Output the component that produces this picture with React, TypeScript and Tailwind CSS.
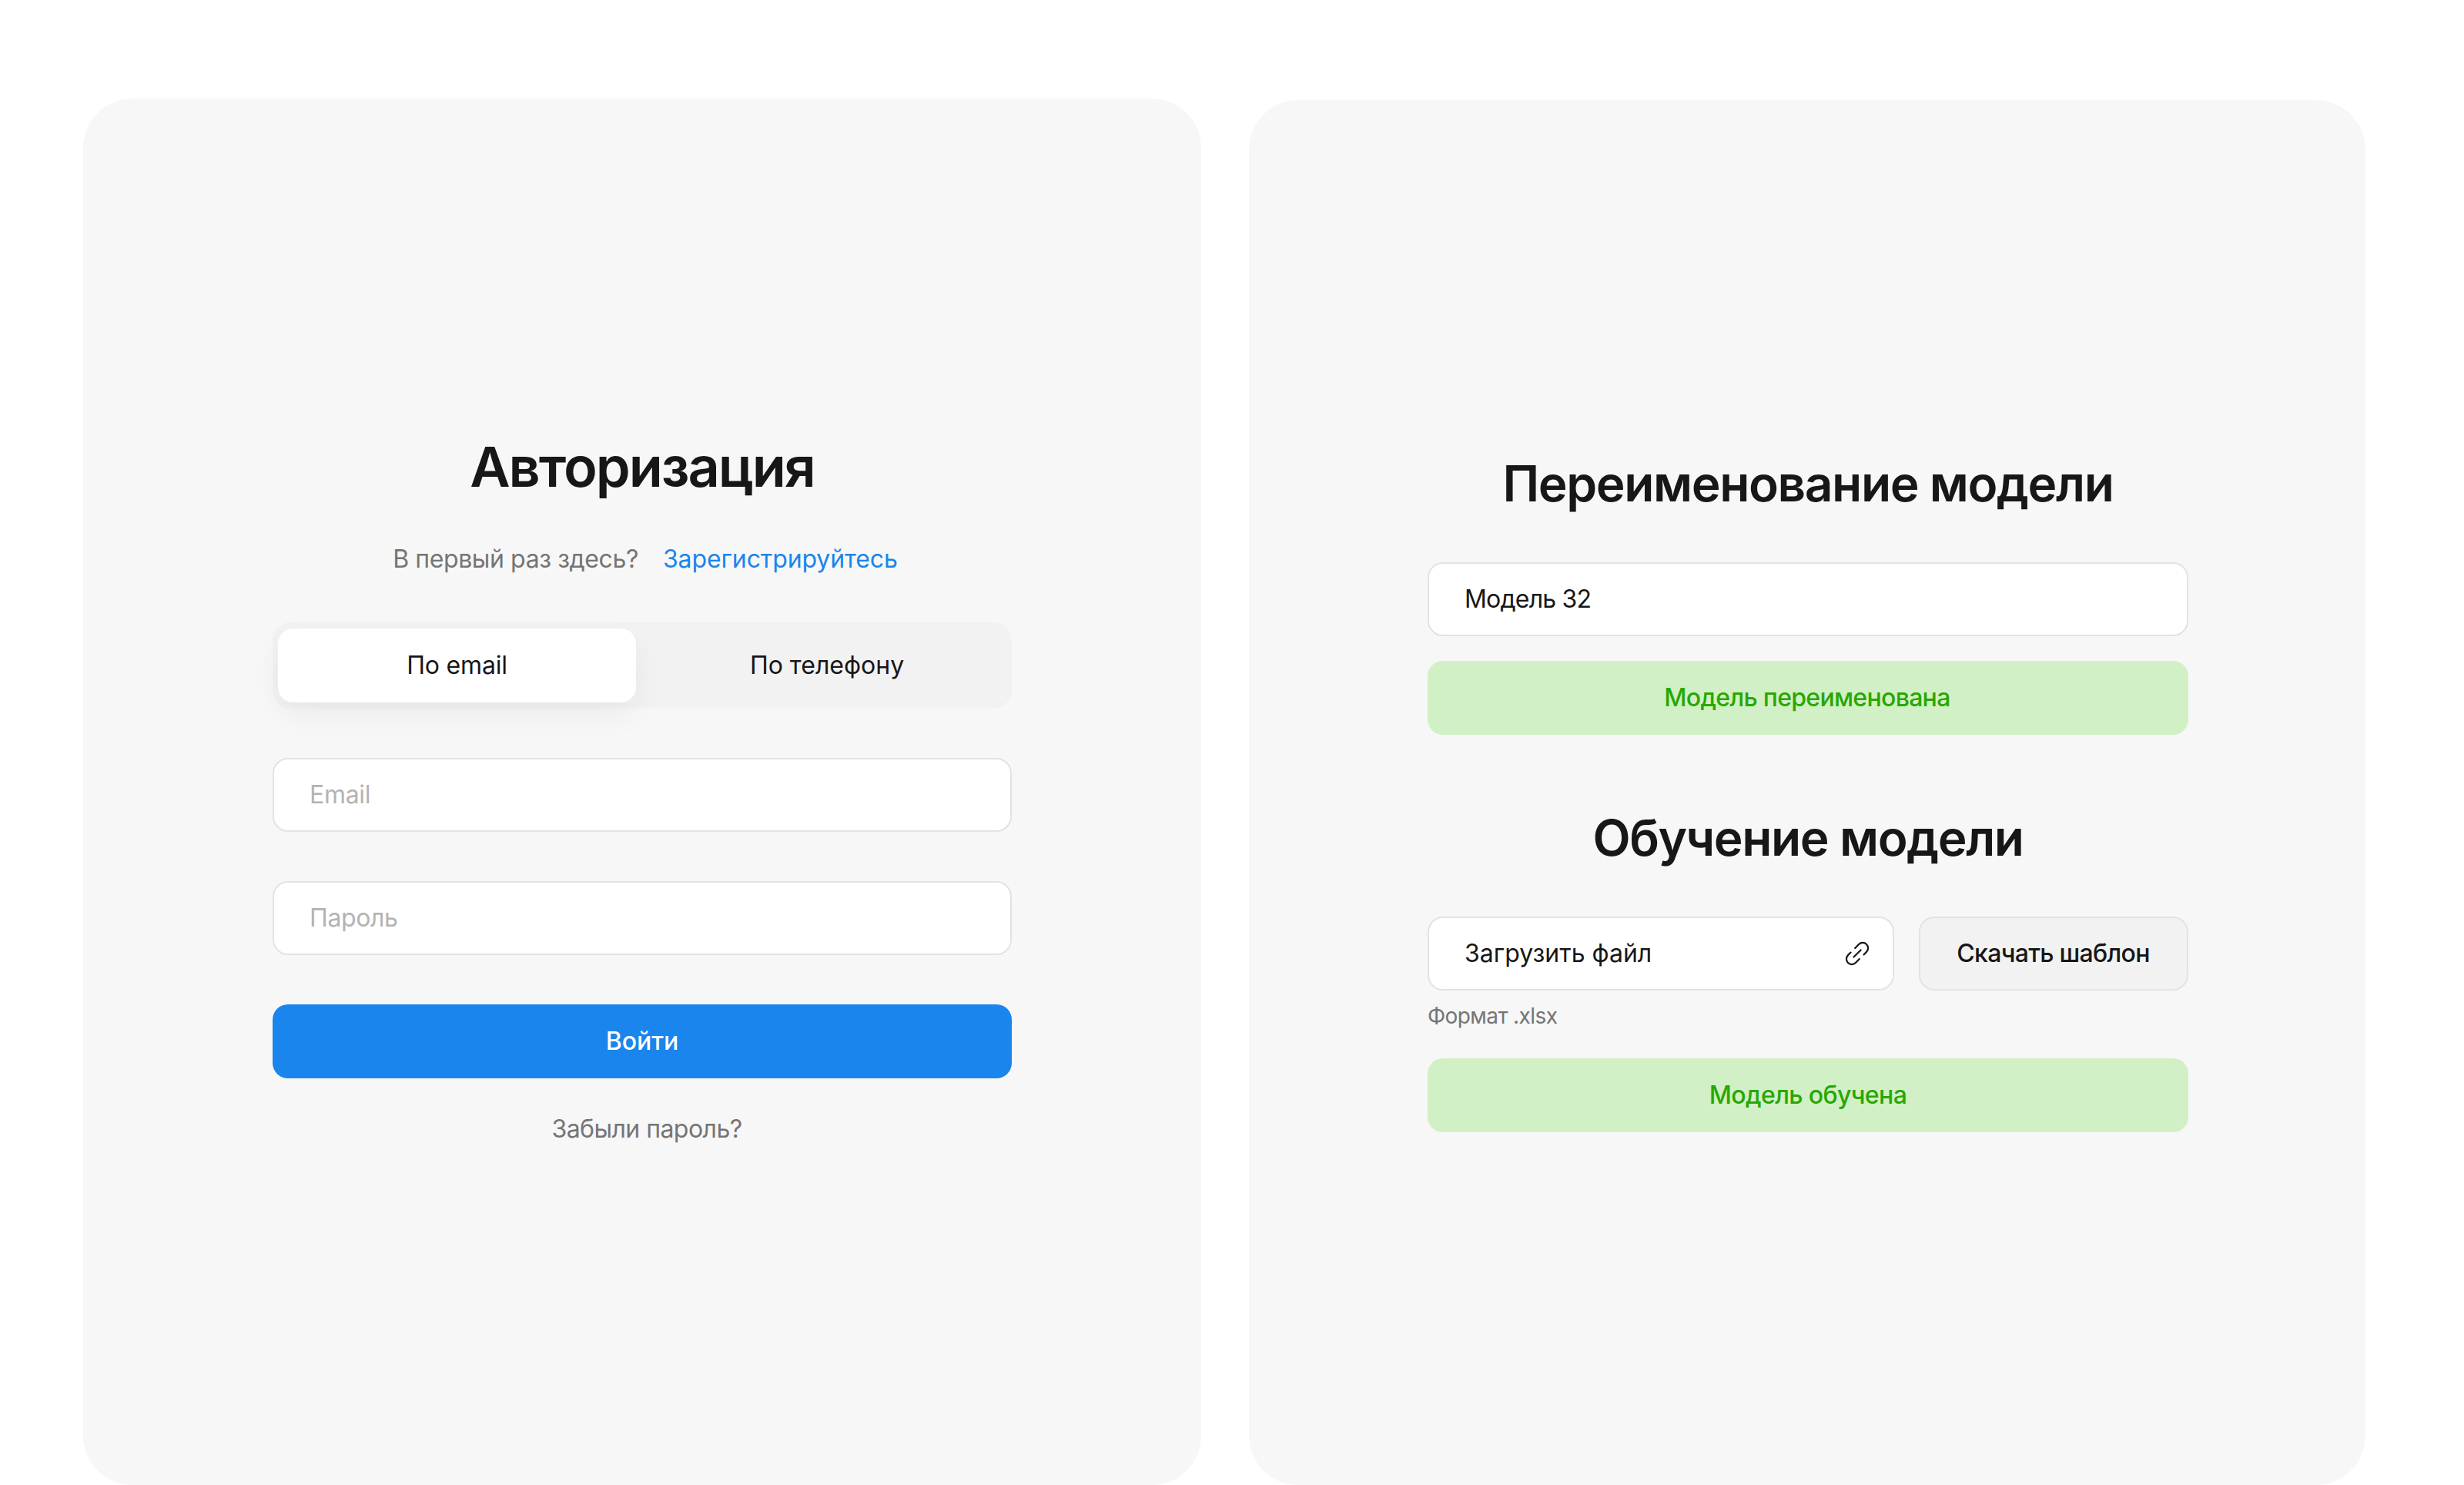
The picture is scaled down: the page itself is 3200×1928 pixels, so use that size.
export default function App() {
  const font = { fontFamily: 'Inter, "Noto Sans", sans-serif' };
  return (
    <div style={font} className="flex h-[1928px] w-[3200px] gap-[62px] overflow-hidden bg-white pl-[108px] text-[32px] text-[#171717]">
      <section className="mt-[128px] flex h-[1800px] w-[1452px] flex-col items-center rounded-[64px] bg-[#f7f7f7] pt-[432px]">
        <h1 className="h-[92px] text-[72px] font-semibold leading-[92px] tracking-[-2px]">Авторизация</h1>
        <p className="mt-[52px] ml-[8px] flex h-[44px] items-center gap-[32px] leading-[44px]">
          <span className="tracking-[-0.4px] text-[#757575]">В первый раз здесь?</span>
          <a className="tracking-[-0.1px] text-[#1a85ed]">Зарегистрируйтесь</a>
        </p>
        <div className="mt-[60px] flex h-[112px] w-[960px] items-center rounded-[24px] bg-[#f2f2f2] pl-[7px]">
          <div className="flex h-[96px] w-[465px] items-center justify-center rounded-[20px] bg-white tracking-[-0.2px] shadow-[0_16px_40px_rgba(0,0,0,0.05)]">По email</div>
          <div className="flex h-[96px] flex-1 items-center justify-center pl-[8px]">По телефону</div>
        </div>
        <input placeholder="Email" className="mt-[64px] h-[96px] w-[960px] rounded-[20px] border-2 border-[#e3e3e3] bg-white px-[46px] pb-[2px] text-[32px] tracking-[-0.3px] outline-none placeholder:text-[#b3b3b3]" />
        <input placeholder="Пароль" className="mt-[64px] h-[96px] w-[960px] rounded-[20px] border-2 border-[#e3e3e3] bg-white px-[46px] pb-[2px] text-[32px] tracking-[-0.4px] outline-none placeholder:text-[#b3b3b3]" />
        <button className="mt-[64px] h-[96px] w-[960px] rounded-[20px] bg-[#1a85ed] text-[32px] font-medium text-white">Войти</button>
        <a className="mt-[44px] ml-[12px] h-[44px] leading-[44px] tracking-[-0.55px] text-[#757575]">Забыли пароль?</a>
      </section>
      <section className="mt-[130px] flex h-[1798px] w-[1450px] flex-col items-center rounded-[64px] bg-[#f7f7f7] pl-[2px] pt-[458px]">
        <h2 className="h-[80px] text-[64px] font-semibold leading-[80px] tracking-[-1.4px]">Переименование модели</h2>
        <div className="mt-[62px] flex w-[988px] flex-col gap-[32px]">
          <div className="flex h-[96px] items-center rounded-[20px] border-2 border-[#e3e3e3] bg-white px-[46px] tracking-[-0.8px]">Модель 32</div>
          <div className="flex h-[96px] items-center justify-center rounded-[20px] bg-[#d2f0c6] pr-[2px] font-medium tracking-[-0.7px] text-[#27a800]">Модель переименована</div>
        </div>
        <h2 className="mt-[94px] h-[80px] text-[64px] font-semibold leading-[80px] tracking-[-1.4px]">Обучение модели</h2>
        <div className="mt-[62px] w-[988px]">
          <div className="flex gap-[32px]">
            <div className="flex h-[96px] flex-1 items-center justify-between rounded-[20px] border-2 border-[#e3e3e3] bg-white pl-[46px] pr-[30px]">
              <span>Загрузить файл</span>
              <svg width="32" height="32" viewBox="0 0 32 32" fill="none" stroke="#171717" strokeWidth="2.2" strokeLinecap="round">
                <g transform="translate(16 16) rotate(-45)">
                  <path d="M3-7H10A7 7 0 0 1 10 7H5" />
                  <path d="M-3 7H-10A7 7 0 0 1-10-7H-5" />
                  <path d="M-6.500 0H6.500" />
                </g>
              </svg>
            </div>
            <div className="flex h-[96px] w-[350px] items-center justify-center rounded-[20px] border-2 border-[#e3e3e3] bg-[#f2f2f2] pr-[1px] font-medium tracking-[-0.7px]">Скачать шаблон</div>
          </div>
          <p className="mt-[16px] h-[34px] text-[28px] leading-[34px] tracking-[-0.6px] text-[#757575]">Формат .xlsx</p>
          <div className="mt-[38px] flex h-[96px] items-center justify-center rounded-[20px] bg-[#d2f0c6] font-medium tracking-[-0.6px] text-[#27a800]">Модель обучена</div>
        </div>
      </section>
    </div>
  );
}
